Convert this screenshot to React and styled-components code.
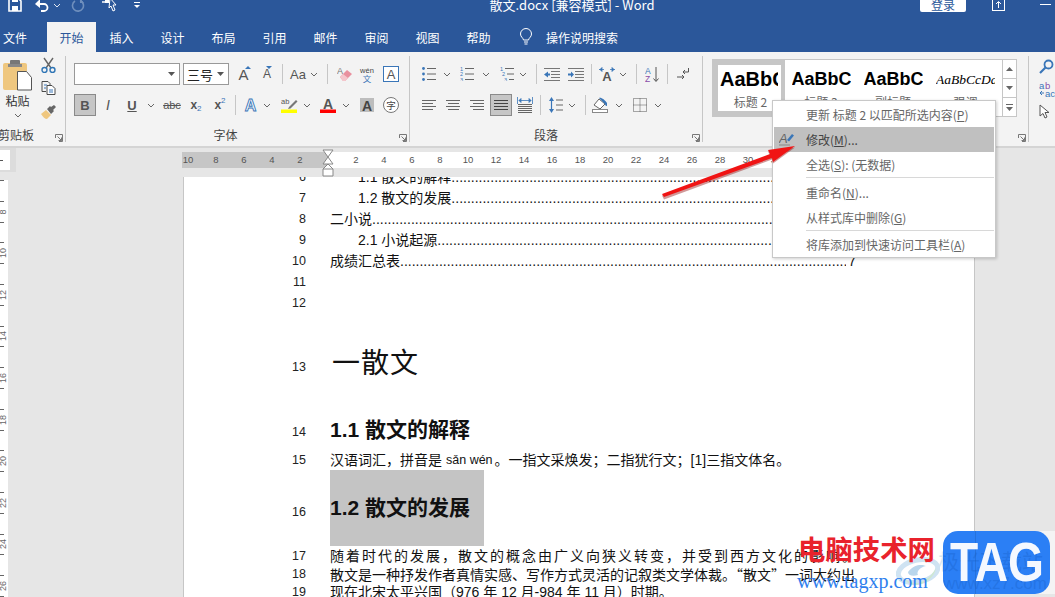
import React from 'react';
import styled, { createGlobalStyle } from 'styled-components';

const Global = createGlobalStyle`
  html, body { margin: 0; padding: 0; background: #e6e6e6; overflow: hidden; }
  * { box-sizing: border-box; }
  body { font-family: "Liberation Sans", "Noto Sans CJK SC", sans-serif; }
`;
const CJK = `"Noto Sans CJK SC", "Liberation Sans", sans-serif`;
const DOC = `"Liberation Sans", "Noto Sans CJK SC", sans-serif`;

const Root = styled.div`position: relative; width: 1055px; height: 597px; overflow: hidden; display: flex; flex-direction: column; background: #e6e6e6;`;

/* ---------- title bar ---------- */
const TitleBar = styled.header`height: 22px; flex: none; background: #2b579a; display: flex; align-items: flex-start; color: #fff; overflow: hidden; position: relative;`;
const QuickSlot = styled.div`width: ${p => p.$w}px; margin-left: ${p => p.$ml || 0}px; margin-top: -5px; height: 20px; display: flex; align-items: center; justify-content: center;`;
const WindowTitle = styled.div`margin-left: 342px; width: 176px; margin-top: -3px; font: 13px/16px ${CJK}; white-space: pre; text-align: center;`;
const Login = styled.div`margin-left: 260px; width: 46px; height: 12px; background: #fff; border-radius: 0 0 2px 2px; color: #2b579a; font: 12px/9px ${CJK}; text-align: center; overflow: hidden;`;

/* ---------- tabs ---------- */
const TabBar = styled.nav`height: 30px; flex: none; background: #2b579a; display: flex; align-items: stretch;`;
const Tab = styled.div`width: ${p => p.$w || 51}px; margin-right: ${p => p.$mr || 0}px; display: flex; align-items: center; justify-content: center; font: 12px ${CJK}; color: ${p => p.$active ? '#2b579a' : '#fff'}; background: ${p => p.$active ? '#f3f3f3' : 'transparent'};`;
const Bulb = styled.div`margin-left: 8px; width: 28px; display: flex; align-items: center; justify-content: center;`;
const Search = styled.div`margin-left: 6px; display: flex; align-items: center; font: 12px ${CJK}; color: #fff;`;

/* ---------- ribbon ---------- */
const Ribbon = styled.section`flex: none; background: #f3f3f3; display: flex; padding-top: 4px; border-bottom: 2px solid #d4d4d4; height: 96px;`;
const Group = styled.div`position: relative; width: ${p => p.$w}px; height: 86px; border-right: 1px solid #c6c6c6; display: flex; flex-direction: column; padding-left: ${p => p.$pl || 0}px; padding-top: 7px; flex: none;`;
const Row = styled.div`display: flex; height: 22px; margin-bottom: 9px; align-items: center;`;
const GroupLabel = styled.div`position: absolute; left: ${p => p.$l || 0}px; right: ${p => p.$r || 0}px; bottom: 0; height: 14px; font: 12px/14px ${CJK}; color: #444; text-align: center; white-space: nowrap; ${p => p.$left ? 'text-align:left;' : ''}`;
const Launcher = styled.div`position: absolute; right: 2px; bottom: 0; width: 8px; height: 8px; display: flex;`;
const Slot = styled.div`width: ${p => p.$w}px; margin-left: ${p => p.$ml || 0}px; height: 22px; flex: none; display: flex; align-items: center; justify-content: center; color: #555; position: relative; ${p => p.$on ? 'background:#c6c6c6;border:1px solid #8a8a8a;' : ''}`;
const Sep = styled.div`width: 1px; height: 20px; flex: none; background: #c6c6c6; margin-left: ${p => p.$ml || 0}px; margin-right: ${p => p.$mr || 0}px;`;
const Combo = styled.div`width: ${p => p.$w}px; margin-right: ${p => p.$mr || 0}px; height: 22px; flex: none; background: #fff; border: 1px solid #999; display: flex; align-items: center; justify-content: space-between; padding: 0 4px 0 3px; font: 13px ${CJK}; color: #222;`;
const GlyphA = styled.span`font: ${p => p.$b ? 'bold ' : ''}${p => p.$i ? 'italic ' : ''}${p => p.$s || 13}px "Liberation Sans", sans-serif; color: ${p => p.$c || '#555'}; line-height: 1; ${p => p.$u ? 'text-decoration: underline;' : ''} ${p => p.$strike ? 'text-decoration: line-through;' : ''}`;
const Sub = styled.sub`font-size: 8px; color: #3a76b8; vertical-align: ${p => p.$up ? '6px' : '-2px'}; line-height: 0; font-weight: 400;`;
const ClipColumn = styled.div`display: flex; gap: 0; height: 86px; margin-top: -7px;`;
const PasteCol = styled.div`width: 37px; display: flex; flex-direction: column; align-items: center; padding-top: 4px; margin-left: -1px;`;
const PasteText = styled.div`font: 12px/16px ${CJK}; color: #333; margin: 2px 0 4px;`;
const SmallCol = styled.div`width: 22px; margin-left: 1px; margin-top: -3px; display: flex; flex-direction: column; align-items: center;`;
const SmallIcon = styled.div`height: 23.5px; display: flex; align-items: center;`;

const Gallery = styled.div`margin: -4px 0 0 9px; width: 305px; height: 58px; background: #fff; border: 1px solid #c6c6c6; display: flex; flex: none;`;
const StyleCard = styled.div`width: ${p => p.$w}px; height: 56px; flex: none; overflow: hidden; display: flex; flex-direction: column; align-items: ${p => p.$on ? 'flex-start' : 'center'}; ${p => p.$on ? 'border: 5px solid #c6c6c6; border-right-width: 4px; padding-left: 2px; background:#fff;' : 'padding-top:5px;'}`;
const StyleSample = styled.div`height: 29px; width: ${p => p.$clip}px; flex: none; overflow: hidden; white-space: nowrap; font: ${p => p.$italic ? 'italic 13.5px "Liberation Serif", serif' : `bold ${p.$s}px "Liberation Sans", sans-serif`}; color: #000; line-height: 29px;`;
const StyleName = styled.div`width: 100%; text-align: center; font: 12px/16px ${CJK}; color: #666;`;
const GalleryScroll = styled.div`margin-left: auto; width: 15px; display: flex; flex-direction: column; border-left: 1px solid #c6c6c6;`;
const ScrollBtn = styled.div`flex: 1; display: flex; align-items: center; justify-content: center; & + & { border-top: 1px solid #c6c6c6; }`;
const EditCol = styled.div`margin-left: 10px; width: 24px; display: flex; flex-direction: column; align-items: flex-start; margin-top: -1px; overflow: hidden;`;
const EditIcon = styled.div`height: ${p => p.$h}px; display: flex; align-items: center;`;

/* ---------- work area ---------- */
const Work = styled.main`flex: 1; display: flex; min-height: 0; position: relative;`;
const LeftRail = styled.div`width: 183px; flex: none; display: flex; flex-direction: column;`;
const RulerCorner = styled.div`width: 16px; height: 24px; background: #dcdcdc; padding: 2px 6px 2px 0; flex: none;`;
const RulerCornerInner = styled.div`height: 20px; background: #fff; display: flex; align-items: center;`;
const RulerCornerMark = styled.div`width: 3px; height: 1px; background: #555;`;
const VRuler = styled.div`width: 8px; margin-top: 8px; background: #fff; flex: 1; overflow: hidden;`;
const VCell = styled.div`height: 20.8px; border-top: 1px solid transparent; position: relative; display: flex; align-items: center;
  &::before { content: ""; position: absolute; left: 0; top: -1px; width: 4px; height: 1px; background: #666; }`;
const VNum = styled.span`font: 9px "Liberation Sans", sans-serif; color: #666; transform: rotate(-90deg); margin-left: -3px; display: block; width: 12px; text-align: center;`;
const PageCol = styled.div`width: 792px; flex: none; display: flex; flex-direction: column; min-height: 0;`;
const HRuler = styled.div`height: 16px; margin-top: 4px; display: flex; flex: none; font: 9.5px/16px "Liberation Sans", sans-serif; color: #555; margin-bottom: 9px; margin-left: -1px;`;
const RulerMargin = styled.div`width: 146px; background: #c6c6c6; display: flex; justify-content: flex-end; overflow: hidden; flex: none;`;
const RulerBody = styled.div`flex: 1; background: #fff; display: flex; overflow: hidden; padding-left: 14px;`;
const RulerCell = styled.span`width: ${p => p.$w || 28}px; flex: none; text-align: center;`;
const Indent = styled.svg`position: absolute; left: 139px; top: 1px;`;
const RulerWrap = styled.div`position: relative; flex: none;`;
const Page = styled.article`flex: 1; background: #fff; border-left: 1px solid #c6c6c6; border-right: 1px solid #c6c6c6; overflow: hidden; min-height: 0;`;
const Scroll = styled.div`margin-top: -10px;`;
const DocLine = styled.div`display: flex; height: ${p => p.$h}px; align-items: center; padding-bottom: ${p => p.$pb || 0}px;`;
const LineNo = styled.div`width: 122px; flex: none; text-align: right; font: 12.5px "Liberation Sans", sans-serif; color: #222; transform: translateY(${p => p.$dy || 0}px);`;
const Text = styled.div`margin-left: ${p => p.$indent ? 52 : 24}px; font: 14px/20px ${p => p.$cjk ? CJK : DOC}; color: #111; white-space: nowrap; letter-spacing: ${p => p.$ls || 0}px; display: flex; width: ${p => p.$toc ? (p.$indent ? 498 : 526) : 'auto'}px;`;
const Leader = styled.span`flex: 1; overflow: hidden; min-width: 0;`;
const TocPage = styled.span`width: 10px; flex: none; text-align: right;`;
const Title = styled.h1`margin: 0 0 12px 26px; font: 400 28px/40px ${CJK}; color: #111; letter-spacing: 1px;`;
const Heading = styled.h2`margin: ${p => p.$flush ? '0' : '0 0 4px 24px'}; font: bold 21px/26px ${DOC}; color: #111; white-space: nowrap;`;
const Pinyin = styled.span`font-size: 12.5px; margin: 0 2px 0 4px;`;
const Highlight = styled.div`margin-left: 24px; width: 154px; height: 76px; background: #c4c4c4; display: flex; align-items: center;`;

/* ---------- overlays ---------- */
const Menu = styled.div`position: absolute; left: 772px; top: 100px; width: 224px; height: 158px; background: #fff; border: 1px solid #c8c8c8; box-shadow: 1px 1px 3px rgba(0,0,0,.2); padding: 1px; z-index: 5;`;
const MenuItem = styled.div`height: 25px; display: flex; align-items: center; padding: 0 0 1px 32px; position: relative; font: 12px ${CJK}; color: ${p => p.$active ? '#444' : '#666'}; background: ${p => p.$active ? '#c0c0c0' : 'transparent'};`;
const MenuIcon = styled.div`position: absolute; left: 5px; top: 4px; display: flex;`;
const MenuSep = styled.div`height: 1px; margin: 0 0 ${p => p.$mb}px 32px; background: #d8d8d8;`;
const Arrow = styled.svg`position: absolute; left: 655px; top: 135px; z-index: 6;`;
const WatermarkCn = styled.div`position: absolute; left: 798px; top: 531px; font: bold 27.4px/34px ${CJK}; color: #e9232c; white-space: nowrap; z-index: 7;`;
const WatermarkUrl = styled.div`position: absolute; left: 797px; top: 569px; font: 20px/24px "Liberation Serif", serif; color: #2f80ee; white-space: nowrap; z-index: 7;`;
const Swirl = styled.svg`position: absolute; left: 896px; top: 556px; z-index: 6;`;
const LogoPlate = styled.div`position: absolute; left: 976px; top: 531px; width: 79px; height: 63px; background: #f4f4f4; z-index: 6;`;
const Logo = styled.div`position: absolute; left: 943px; top: 531px; width: 107px; height: 63px; border-radius: 15px; background: #2b7ff5; z-index: 8; display: flex; align-items: center; justify-content: center; overflow: hidden;`;
const LogoEdge = styled.div`position: absolute; left: 32px; top: 0; bottom: 0; width: 1px; background: rgba(0,0,0,.1);`;
const GhostCn = styled.div`position: absolute; left: -5px; top: 17px; font: 21px/24px ${CJK}; color: rgba(20,90,190,.3); white-space: nowrap;`;
const GhostUrl = styled.div`position: absolute; left: 0; top: 43px; font: 17px/20px "Liberation Sans", sans-serif; color: rgba(20,90,190,.3); white-space: nowrap;`;
const FaintCn = styled.div`position: absolute; left: 938px; top: 548px; font: 21px/24px ${CJK}; color: #d8e6f0; white-space: nowrap; z-index: 6;`;
const LogoText = styled.div`position: relative; font: bold 55px/63px "Liberation Sans", sans-serif; color: #f4f8ff; transform: scaleX(.84);`;

/* ---------- icons ---------- */
const Chev = ({ c = '#666' }) => <svg width="8" height="5" viewBox="0 0 8 5"><path d="M1 1l3 3 3-3" fill="none" stroke={c} strokeWidth="1" /></svg>;
const Caret = () => <svg width="7" height="4" viewBox="0 0 7 4"><path d="M0 0h7L3.5 4z" fill="#555" /></svg>;
const LaunchIcon = () => <svg width="8" height="8" viewBox="0 0 8 8"><path d="M.5 4V.5H7.5V7.5H4M2.5 2.5l4 4M6.5 3.5v3h-3" fill="none" stroke="#777" /></svg>;
const Save = () => <svg width="14" height="14" viewBox="0 0 14 14"><path d="M1 1h10l2 2v10H1z" fill="none" stroke="#fff" strokeWidth="1.6" /><rect x="4" y="8" width="6" height="5" fill="#fff" /><rect x="4" y="1" width="6" height="3" fill="#fff" /></svg>;
const Undo = ({ c = '#fff' }) => <svg width="16" height="14" viewBox="0 0 16 14"><path d="M4 6h6a3.5 3.5 0 0 1 0 7H7" fill="none" stroke={c} strokeWidth="1.8" /><path d="M1 6l5-5v9z" fill={c} /></svg>;
const Redo = () => <svg width="14" height="14" viewBox="0 0 14 14"><path d="M9 2.500A5.500 5.500 0 1 1 4 3" fill="none" stroke="#6f8fbd" strokeWidth="1.6" /><path d="M9 0v5h4z" fill="#6f8fbd" /></svg>;
const Touch = () => <svg width="18" height="16" viewBox="0 0 18 16"><path d="M1 5h5V0h3" fill="none" stroke="#fff" strokeWidth="1.500" /><rect x="4" y="1" width="4" height="5" fill="#fff" /><path d="M9 1l6 7h-3l2 5-2 1-2-5-2 2z" fill="#2b579a" stroke="#fff" /></svg>;
const Customize = () => <svg width="8" height="8" viewBox="0 0 8 8"><path d="M1 1.500h6" stroke="#fff" /><path d="M1 4h6L4 7z" fill="#fff" /></svg>;
const BulbIcon = () => <svg width="14" height="18" viewBox="0 0 14 18"><path d="M4.500 12C4 9.500 1.500 9 1.500 6a5.500 5.500 0 0 1 11 0c0 3-2.500 3.500-3 6z" fill="none" stroke="#fff" /><path d="M5 14h4M5.500 16h3" stroke="#fff" /></svg>;
const Paste = () => <svg width="30" height="31" viewBox="0 0 30 31"><rect x="0" y="3" width="24" height="27" rx="2" fill="#efc77f" /><rect x="7" y="0" width="10" height="5" rx="1" fill="#777" /><rect x="5" y="4" width="14" height="3" fill="#888" /><path d="M14.500 11.500h9l5 6v12.500h-14z" fill="#fff" stroke="#555" /></svg>;
const Cut = () => <svg width="15" height="16" viewBox="0 0 15 16"><path d="M3 1l7 10M12 1L5 11" stroke="#666" strokeWidth="1.400" /><circle cx="3.500" cy="13" r="2.500" fill="none" stroke="#2f75b5" strokeWidth="1.400" /><circle cx="11.500" cy="13" r="2.500" fill="none" stroke="#2f75b5" strokeWidth="1.400" /></svg>;
const Copy = () => <svg width="15" height="14" viewBox="0 0 15 14"><path d="M1 .5h6l2 2v3M1 .5v10h4" fill="none" stroke="#4a4a4a" /><path d="M6 4.500h5l3 3v6H6z" fill="#fff" stroke="#4a4a4a" /><path d="M3 4h3M3 7h2M8 9h4M8 11h4" stroke="#3a76b8" /></svg>;
const Brush = () => <svg width="15" height="14" viewBox="0 0 15 14"><path d="M0 9l5-4 5 5-4 4c-2 0-4-2-6-5z" fill="#efc77f" /><path d="M6 4l3-3 1 1 3-2 2 2-3 3 1 1-3 3z" fill="#666" /></svg>;
const Grow = ({ down }) => <svg width="8" height="4" viewBox="0 0 8 4" style={{ position: 'absolute', top: 3, right: down ? 2 : 5 }}><path d={down ? 'M0 0h6L3 3z' : 'M3 0l3 3H0z'} fill="#3a76b8" /></svg>;
const Eraser = () => <svg width="16" height="16" viewBox="0 0 16 16"><text x="0" y="8" fontSize="9" fill="#777" fontFamily="Liberation Sans">A</text><path d="M3 11l7-7 5 4-7 7H6z" fill="#e9919f" /><path d="M3 11l3-3 5 4-3 3H6z" fill="#f5c6cc" /></svg>;
const Wen = () => <svg width="16" height="17" viewBox="0 0 16 17"><text x="8" y="7" textAnchor="middle" fontSize="7.500" fill="#444" fontFamily="Liberation Sans">wén</text><text x="8" y="16" textAnchor="middle" fontSize="8.500" fill="#3a76b8" fontFamily="Noto Sans CJK SC">文</text></svg>;
const BoxA = () => <svg width="16" height="16" viewBox="0 0 16 16"><rect x=".5" y=".5" width="15" height="15" fill="#fff" stroke="#3a76b8" /><text x="8" y="13" textAnchor="middle" fontSize="13" fill="#555" fontFamily="Liberation Sans">A</text></svg>;
const EffectA = () => <svg width="15" height="16" viewBox="0 0 15 16"><text x="7.500" y="14" textAnchor="middle" fontSize="16" fontWeight="bold" fill="#fff" stroke="#3a76b8" strokeWidth=".9" fontFamily="Liberation Sans">A</text></svg>;
const Highlighter = () => <svg width="17" height="16" viewBox="0 0 17 16"><text x="0" y="7" fontSize="7.500" fill="#555" fontFamily="Liberation Sans">ab</text><path d="M8 10l7-7 1.500 1.500-7 7-2.500.5z" fill="#777" /><rect x="0" y="12.500" width="16" height="3.500" fill="#ffff00" /></svg>;
const FontColor = () => <svg width="16" height="16" viewBox="0 0 16 16"><text x="8" y="11.500" textAnchor="middle" fontSize="14" fontWeight="bold" fill="#555" fontFamily="Liberation Sans">A</text><rect x="0" y="12.500" width="16" height="3.500" fill="#ff0000" /></svg>;
const GreyA = () => <svg width="14" height="14" viewBox="0 0 14 14"><rect width="14" height="14" fill="#bdbdbd" /><text x="7" y="12.500" textAnchor="middle" fontSize="14" fontWeight="bold" fill="#444" fontFamily="Liberation Sans">A</text></svg>;
const Circled = () => <svg width="16" height="16" viewBox="0 0 16 16"><circle cx="8" cy="8" r="7.500" fill="#fff" stroke="#777" /><text x="8" y="11.500" textAnchor="middle" fontSize="9.500" fill="#444" fontFamily="Noto Sans CJK SC">字</text></svg>;
const List = ({ kind }) => <svg width="14" height="14" viewBox="0 0 14 14">
  {[1.500, 7, 12.500].map((y, i) => <g key={y}>
    {kind === 'dots' ? <circle cx="1.500" cy={y} r="1.400" fill="#3a76b8" /> : <text x={kind === 'multi' ? i * 2 : 0} y={y + 2} fontSize="5.500" fill="#3a76b8" fontFamily="Liberation Sans">{i + 1}</text>}
    <path d={`M${kind === 'multi' ? 5 + i * 2 : 5} ${y}h${kind === 'multi' ? 9 - i * 2 : 9}`} stroke="#666" /></g>)}
</svg>;
const IndentIcon = ({ out }) => <svg width="16" height="13" viewBox="0 0 16 13"><path d="M0 .5h16M7 3.500h9M7 6.500h9M7 9.500h9M0 12.500h16" stroke="#777" /><path d={out ? 'M0 6.500l4-3v2h2v2H4v2z' : 'M6 6.500l-3-3v2H0v2h3v2z'} fill="#3a76b8" /></svg>;
const ChineseLayout = () => <svg width="16" height="14" viewBox="0 0 16 14"><text x="8" y="13.500" textAnchor="middle" fontSize="13" fontWeight="bold" fill="#555" fontFamily="Liberation Sans">A</text><path d="M0 2.500h5M11 2.500h5M1 2.500l2-2v4zM15 2.500l-2-2v4z" stroke="#3a76b8" fill="#3a76b8" strokeWidth=".8" /></svg>;
const Sort = () => <svg width="15" height="17" viewBox="0 0 15 17"><text x="0" y="7.500" fontSize="8.500" fill="#3a76b8" fontFamily="Liberation Sans">A</text><text x="0" y="16" fontSize="8.500" fill="#8a4fa8" fontFamily="Liberation Sans">Z</text><path d="M11 1v14M8.500 12.500L11 15.500l2.500-3" fill="none" stroke="#555" /></svg>;
const Pilcrow = () => <svg width="14" height="12" viewBox="0 0 14 12"><path d="M12.500 0v4H7M9 2L7 4l2 2" fill="none" stroke="#555" /><path d="M1 9h7M6 7l2 2-2 2" fill="none" stroke="#555" /></svg>;
const AlignLines = ({ mode }) => {
  const rows = [[0, 14], mode === 'justify' ? [0, 14] : [mode === 'center' ? 2 : mode === 'right' ? 3 : 0, 11], [0, 14], mode === 'justify' ? [0, 14] : [mode === 'center' ? 2 : mode === 'right' ? 3 : 0, 11]];
  return <svg width="14" height="10" viewBox="0 0 14 10">{rows.map(([x, w], i) => <path key={i} d={`M${x} ${i * 3 + .5}h${w}`} stroke={mode === 'justify' ? '#444' : '#666'} />)}</svg>;
};
const Distributed = () => <svg width="16" height="16" viewBox="0 0 16 16"><path d="M.5 0v7M15.500 0v7M2 3.500h12M2 3.500l2-2v4zM14 3.500l-2-2v4z" stroke="#3a76b8" fill="#3a76b8" strokeWidth=".8" /><path d="M1 7.500h14M1 9.500h14M1 11.500h14M1 13.500h14M1 15.500h14" stroke="#666" /></svg>;
const LineSpacing = () => <svg width="14" height="16" viewBox="0 0 14 16"><path d="M2.500 2v12" stroke="#3a76b8" strokeWidth="1.200" /><path d="M0 4l2.500-4L5 4zM0 12l2.500 4L5 12z" fill="#3a76b8" /><path d="M7 3h7M7 8h7M7 13h7" stroke="#666" /></svg>;
const Shading = () => <svg width="17" height="16" viewBox="0 0 17 16"><path d="M2 8l5-6 6 5-5 5z" fill="#fff" stroke="#666" /><path d="M7 1c2-1 6 2 8 5v3c-2 0-2-2-2-2z" fill="#3a76b8" /><rect x=".5" y="12.500" width="15" height="3" fill="#fff" stroke="#888" /></svg>;
const Borders = () => <svg width="14" height="14" viewBox="0 0 14 14"><path d="M.5.500h13v13H.5zM7 .5v13M.5 7h13" fill="none" stroke="#555" strokeDasharray="1 1" /></svg>;
const Magnifier = () => <svg width="15" height="15" viewBox="0 0 15 15"><circle cx="9.500" cy="5.500" r="4" fill="none" stroke="#3a76b8" strokeWidth="1.800" /><path d="M6.500 8.500L1 14" stroke="#3a76b8" strokeWidth="2.200" /></svg>;
const Replace = () => <svg width="18" height="17" viewBox="0 0 18 17"><text x="0" y="7.500" fontSize="9.500" fill="#3a76b8" fontFamily="Liberation Sans">a</text><text x="6" y="7.500" fontSize="9.500" fill="#8a4fa8" fontFamily="Liberation Sans">b</text><path d="M1 12h4M3 10l-2 2 2 2" fill="none" stroke="#3a76b8" /><text x="6" y="16" fontSize="9.500" fill="#3a76b8" fontFamily="Liberation Sans">ac</text></svg>;
const Pointer = () => <svg width="11" height="15" viewBox="0 0 11 15"><path d="M1 1v11l3-2.500 2 4.500 2-1-2-4.500h4z" fill="#fff" stroke="#555" /></svg>;
const Restore = () => <svg width="13" height="12" viewBox="0 0 13 12"><rect x=".5" y=".5" width="12" height="11" fill="none" stroke="#fff" /><path d="M6.500 9V3M4 5l2.500-2.500L9 5" fill="none" stroke="#fff" /></svg>;
const Minimize = () => <svg width="11" height="2" viewBox="0 0 11 2"><path d="M0 .5h11" stroke="#fff" /></svg>;
const Pencil = () => <svg width="16" height="15" viewBox="0 0 16 15"><text x="0" y="12" fontSize="13" fontStyle="italic" fill="#666" fontFamily="Liberation Sans">A</text><path d="M8 9l5-6 2 1.500-5 6z" fill="#3a76b8" /><path d="M0 14h11" stroke="#888" /></svg>;
const ScrollUp = () => <svg width="7" height="4" viewBox="0 0 7 4"><path d="M3.500 0L7 4H0z" fill="#666" /></svg>;
const ScrollDown = () => <svg width="7" height="4" viewBox="0 0 7 4"><path d="M0 0h7L3.500 4z" fill="#666" /></svg>;
const ScrollMore = () => <svg width="7" height="7" viewBox="0 0 7 7"><path d="M0 .5h7" stroke="#666" /><path d="M0 3h7L3.500 7z" fill="#666" /></svg>;

const Toc = ({ no, h, indent, text, count }) => (
  <DocLine $h={h}><LineNo>{no}</LineNo><Text $toc $indent={indent}>{text}<Leader>{'.'.repeat(count)}</Leader><TocPage>7</TocPage></Text></DocLine>
);

const LEFT = [10, 8, 6, 4, 2];
const RIGHT = Array.from({ length: 22 }, (_, i) => (i + 1) * 2);

export default function App() {
  return (
    <Root>
      <Global />
      <TitleBar>
        <QuickSlot $w={16} $ml={7}><Save /></QuickSlot>
        <QuickSlot $w={18} $ml={10}><Undo /></QuickSlot>
        <QuickSlot $w={10} $ml={1}><Chev c="#dfe6f1" /></QuickSlot>
        <QuickSlot $w={16} $ml={8}><Redo /></QuickSlot>
        <QuickSlot $w={20} $ml={14}><Touch /></QuickSlot>
        <QuickSlot $w={10} $ml={12}><Customize /></QuickSlot>
        <WindowTitle>散文.docx [兼容模式] - Word</WindowTitle>
        <Login>登录</Login>
        <QuickSlot $w={14} $ml={25}><Restore /></QuickSlot>
        <QuickSlot $w={12} $ml={34}><Minimize /></QuickSlot>
      </TitleBar>
      <TabBar>
        <Tab $w={30} $mr={17}>文件</Tab>
        <Tab $w={49} $active>开始</Tab>
        {['插入', '设计', '布局', '引用', '邮件', '审阅', '视图', '帮助'].map(t => <Tab key={t}>{t}</Tab>)}
        <Bulb><BulbIcon /></Bulb>
        <Search>操作说明搜索</Search>
      </TabBar>
      <Ribbon>
        <Group $w={66}>
          <ClipColumn>
            <PasteCol><Paste /><PasteText>粘贴</PasteText><Chev /></PasteCol>
            <SmallCol>
              <SmallIcon><Cut /></SmallIcon>
              <SmallIcon><Copy /></SmallIcon>
              <SmallIcon><Brush /></SmallIcon>
            </SmallCol>
          </ClipColumn>
          <GroupLabel $l={-2} $r={30} $left>剪贴板</GroupLabel>
          <Launcher><LaunchIcon /></Launcher>
        </Group>
        <Group $w={344} $pl={8}>
          <Row>
            <Combo $w={106} $mr={3}><span /><Caret /></Combo>
            <Combo $w={46}>三号<Caret /></Combo>
            <Slot $w={29}><GlyphA $s={15}>A</GlyphA><Grow /></Slot>
            <Slot $w={18}><GlyphA $s={12}>A</GlyphA><Grow down /></Slot>
            <Sep $ml={6} $mr={5} />
            <Slot $w={20}><GlyphA $s={13}>Aa</GlyphA></Slot>
            <Slot $w={12}><Chev /></Slot>
            <Sep $ml={7} $mr={5} />
            <Slot $w={24}><Eraser /></Slot>
            <Slot $w={20}><Wen /></Slot>
            <Slot $w={28}><BoxA /></Slot>
          </Row>
          <Row>
            <Slot $w={22} $on><GlyphA $b $s={13}>B</GlyphA></Slot>
            <Slot $w={24}><GlyphA $i $s={14}>I</GlyphA></Slot>
            <Slot $w={24}><GlyphA $u $b $s={13}>U</GlyphA></Slot>
            <Slot $w={14}><Chev /></Slot>
            <Slot $w={28}><GlyphA $strike $s={11}>abc</GlyphA></Slot>
            <Slot $w={20}><GlyphA $b $s={12}>x<Sub>2</Sub></GlyphA></Slot>
            <Slot $w={28}><GlyphA $b $s={12}>x<Sub $up>2</Sub></GlyphA></Slot>
            <Sep $ml={1} $mr={2} />
            <Slot $w={25}><EffectA /></Slot>
            <Slot $w={8}><Chev /></Slot>
            <Slot $w={28} $ml={4}><Highlighter /></Slot>
            <Slot $w={8}><Chev /></Slot>
            <Slot $w={26} $ml={4}><FontColor /></Slot>
            <Slot $w={8} $ml={1}><Chev /></Slot>
            <Slot $w={33}><GreyA /></Slot>
            <Slot $w={16}><Circled /></Slot>
          </Row>
          <GroupLabel $r={24} $l={0}>字体</GroupLabel>
          <Launcher><LaunchIcon /></Launcher>
        </Group>
        <Group $w={293} $pl={8}>
          <Row>
            <Slot $w={22}><List kind="dots" /></Slot>
            <Slot $w={8} $ml={3}><Chev /></Slot>
            <Slot $w={22} $ml={5}><List kind="num" /></Slot>
            <Slot $w={8} $ml={4}><Chev /></Slot>
            <Slot $w={22} $ml={6}><List kind="multi" /></Slot>
            <Slot $w={8} $ml={1}><Chev /></Slot>
            <Sep $ml={9} />
            <Slot $w={22} $ml={4}><IndentIcon out /></Slot>
            <Slot $w={22} $ml={2}><IndentIcon /></Slot>
            <Sep $ml={4} />
            <Slot $w={22} $ml={4}><ChineseLayout /></Slot>
            <Slot $w={8} $ml={1}><Chev /></Slot>
            <Sep $ml={9} />
            <Slot $w={22} $ml={4}><Sort /></Slot>
            <Sep $ml={4} />
            <Slot $w={22} $ml={4}><Pilcrow /></Slot>
          </Row>
          <Row>
            <Slot $w={22}><AlignLines mode="left" /></Slot>
            <Slot $w={22} $ml={2}><AlignLines mode="center" /></Slot>
            <Slot $w={22} $ml={2}><AlignLines mode="right" /></Slot>
            <Slot $w={22} $ml={2} $on><AlignLines mode="justify" /></Slot>
            <Slot $w={22} $ml={2}><Distributed /></Slot>
            <Sep $ml={4} />
            <Slot $w={22} $ml={4}><LineSpacing /></Slot>
            <Slot $w={8} $ml={1}><Chev /></Slot>
            <Sep $ml={9} />
            <Slot $w={24} $ml={2}><Shading /></Slot>
            <Slot $w={8} $ml={3}><Chev /></Slot>
            <Slot $w={22} $ml={6}><Borders /></Slot>
            <Slot $w={8} $ml={3}><Chev /></Slot>
          </Row>
          <GroupLabel $r={20} $l={0}>段落</GroupLabel>
          <Launcher><LaunchIcon /></Launcher>
        </Group>
        <Group $w={326}>
          <Gallery>
            <StyleCard $w={72} $on><StyleSample $on $s={20} $clip={58}>AaBbC</StyleSample><StyleName>标题 2</StyleName></StyleCard>
            <StyleCard $w={72}><StyleSample $s={18} $clip={59}>AaBbC</StyleSample><StyleName>标题 3</StyleName></StyleCard>
            <StyleCard $w={72}><StyleSample $s={18} $clip={59}>AaBbC</StyleSample><StyleName>副标题</StyleName></StyleCard>
            <StyleCard $w={73}><StyleSample $italic $clip={59}>AaBbCcDd</StyleSample><StyleName>强调</StyleName></StyleCard>
            <GalleryScroll>
              <ScrollBtn><ScrollUp /></ScrollBtn>
              <ScrollBtn><ScrollDown /></ScrollBtn>
              <ScrollBtn><ScrollMore /></ScrollBtn>
            </GalleryScroll>
          </Gallery>
          <Launcher><LaunchIcon /></Launcher>
        </Group>
        <EditCol>
          <EditIcon $h={23}><Magnifier /></EditIcon>
          <EditIcon $h={23}><Replace /></EditIcon>
          <EditIcon $h={20}><Pointer /></EditIcon>
        </EditCol>
      </Ribbon>
      <Work>
        <LeftRail>
          <RulerCorner><RulerCornerInner><RulerCornerMark /></RulerCornerInner></RulerCorner>
          <VRuler>
            {Array.from({ length: 21 }, (_, i) => (
              <VCell key={i}>{i % 2 === 1 ? <VNum>{i + 7}</VNum> : null}</VCell>
            ))}
          </VRuler>
        </LeftRail>
        <PageCol>
          <RulerWrap>
            <HRuler>
              <RulerMargin>{LEFT.map(n => <RulerCell key={n}>{n}</RulerCell>)}<RulerCell $w={14} /></RulerMargin>
              <RulerBody>{RIGHT.map(n => <RulerCell key={n}>{n}</RulerCell>)}</RulerBody>
            </HRuler>
            <Indent width="12" height="28" viewBox="0 0 12 28"><path d="M1 1h10L6 8l5 7H1l5-7z M1 20l5-5 5 5v7H1zM1 20h10" fill="#fff" stroke="#888" /></Indent>
          </RulerWrap>
          <Page>
            <Scroll>
              <Toc no="6" h={20} indent text="1.1 散文的解释 " count={103} />
              <Toc no="7" h={21} indent text="1.2 散文的发展 " count={103} />
              <Toc no="8" h={21} text="二小说" count={124} />
              <Toc no="9" h={21} indent text="2.1 小说起源 " count={107} />
              <Toc no="10" h={21} text="成绩汇总表 " count={116} />
              <DocLine $h={22}><LineNo>11</LineNo></DocLine>
              <DocLine $h={19}><LineNo>12</LineNo></DocLine>
              <DocLine $h={110}><LineNo>13</LineNo><Title>一散文</Title></DocLine>
              <DocLine $h={28} $pb={8}><LineNo>14</LineNo><Heading>1.1 散文的解释</Heading></DocLine>
              <DocLine $h={20}><LineNo>15</LineNo><Text>汉语词汇，拼音是<Pinyin>sǎn wén</Pinyin>。一指文采焕发；二指犹行文；[1]三指文体名。</Text></DocLine>
              <DocLine $h={76}><LineNo $dy={4}>16</LineNo><Highlight><Heading $flush>1.2 散文的发展</Heading></Highlight></DocLine>
              <DocLine $h={19}><LineNo>17</LineNo><Text $ls={2}>随着时代的发展，散文的概念由广义向狭义转变，并受到西方文化的影响。</Text></DocLine>
              <DocLine $h={18}><LineNo>18</LineNo><Text $cjk>散文是一种抒发作者真情实感、写作方式灵活的记叙类文学体裁。“散文”一词大约出</Text></DocLine>
              <DocLine $h={18}><LineNo>19</LineNo><Text>现在北宋太平兴国（976 年 12 月-984 年 11 月）时期。</Text></DocLine>
            </Scroll>
          </Page>
        </PageCol>
      </Work>

      <Menu>
        <MenuItem>更新 标题 2 以匹配所选内容(<u>P</u>)</MenuItem>
        <MenuItem $active><MenuIcon><Pencil /></MenuIcon>修改(<u>M</u>)...</MenuItem>
        <MenuItem>全选(<u>S</u>): (无数据)</MenuItem>
        <MenuSep $mb={2} />
        <MenuItem>重命名(<u>N</u>)...</MenuItem>
        <MenuItem>从样式库中删除(<u>G</u>)</MenuItem>
        <MenuSep $mb={1} />
        <MenuItem>将库添加到快速访问工具栏(<u>A</u>)</MenuItem>
      </Menu>
      <Arrow width="145" height="66" viewBox="0 0 145 66">
        <path d="M7 59L115 19l-2-4 27-4-22 16-1-4L9 63z" fill="#9a1c1c" opacity=".45" transform="translate(0 1.500)" />
        <path d="M7 59L115 19l-2-4 27-4-22 16-1-4L9 62z" fill="#f01414" />
      </Arrow>

      <LogoPlate />
      <FaintCn>极光下载站</FaintCn>
      <Swirl width="44" height="34" viewBox="0 0 44 34"><ellipse cx="22" cy="15" rx="20" ry="11" fill="none" stroke="#cfe3f2" strokeWidth="5" transform="rotate(-12 22 15)" /><path d="M8 22c8 8 22 8 32-10-2 14-24 24-32 10z" fill="#cfe8cf" /><path d="M12 16C18 8 26 8 30 10 24 11 20 16 22 19 16 21 12 19 12 16z" fill="#b9d6ec" /></Swirl>
      <WatermarkCn>电脑技术网</WatermarkCn>
      <WatermarkUrl>www.tagxp.com</WatermarkUrl>
      <Logo>
        <LogoEdge />
        <GhostCn>极光下载站</GhostCn>
        <GhostUrl>www.xz7.com</GhostUrl>
        <LogoText>TAG</LogoText>
      </Logo>
    </Root>
  );
}
